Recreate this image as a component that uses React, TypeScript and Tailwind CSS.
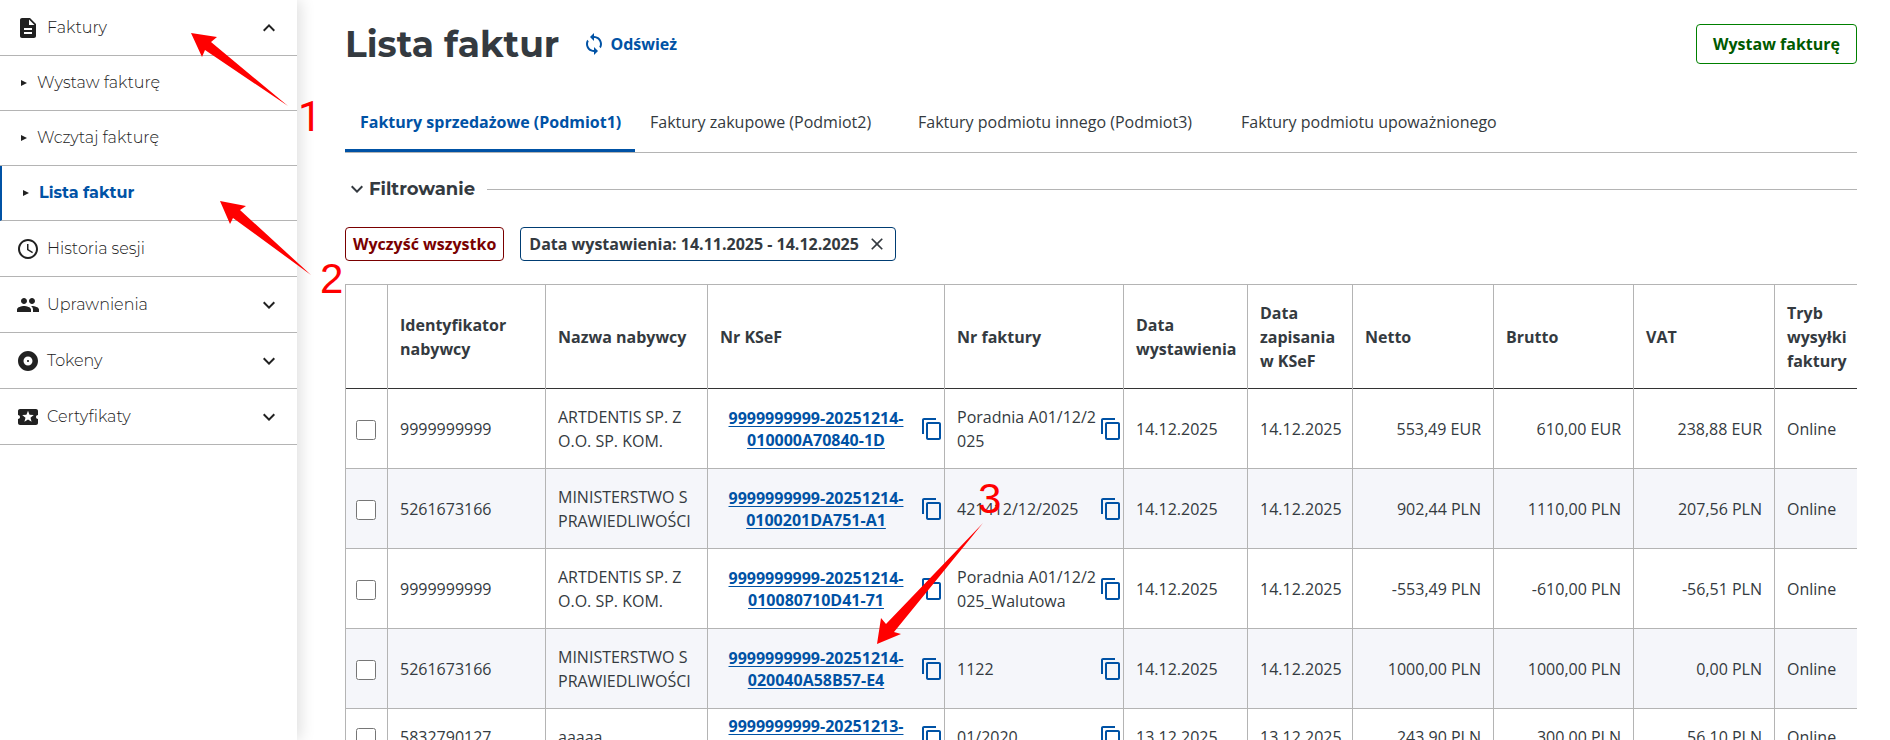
import type { ReactNode } from 'react'
import {
  MdAlbum,
  MdClose,
  MdContentCopy,
  MdDescription,
  MdExpandLess,
  MdExpandMore,
  MdLocalActivity,
  MdPeople,
  MdSchedule,
  MdSync,
} from 'react-icons/md'

const columns = [
  { label: '', width: 'w-[42px]' },
  { label: 'Identyfikator nabywcy', width: 'w-[158px]' },
  { label: 'Nazwa nabywcy', width: 'w-[162px]' },
  { label: 'Nr KSeF', width: 'w-[237px]' },
  { label: 'Nr faktury', width: 'w-[179px]' },
  { label: 'Data wystawienia', width: 'w-[124px]' },
  { label: 'Data zapisania w KSeF', width: 'w-[105px]' },
  { label: 'Netto', width: 'w-[141px]' },
  { label: 'Brutto', width: 'w-[140px]' },
  { label: 'VAT', width: 'w-[141px]' },
  { label: 'Tryb wysyłki faktury', width: 'w-[120px]' },
]

const invoices = [
  { nip: '9999999999', name: 'ARTDENTIS SP. Z O.O. SP. KOM.', ksef: '9999999999-20251214-010000A70840-1D', nr: 'Poradnia A01/12/2025', date: '14.12.2025', netto: '553,49 EUR', brutto: '610,00 EUR', vat: '238,88 EUR' },
  { nip: '5261673166', name: 'MINISTERSTWO SPRAWIEDLIWOŚCI', ksef: '9999999999-20251214-0100201DA751-A1', nr: '421412/12/2025', date: '14.12.2025', netto: '902,44 PLN', brutto: '1110,00 PLN', vat: '207,56 PLN' },
  { nip: '9999999999', name: 'ARTDENTIS SP. Z O.O. SP. KOM.', ksef: '9999999999-20251214-010080710D41-71', nr: 'Poradnia A01/12/2025_Walutowa', date: '14.12.2025', netto: '-553,49 PLN', brutto: '-610,00 PLN', vat: '-56,51 PLN' },
  { nip: '5261673166', name: 'MINISTERSTWO SPRAWIEDLIWOŚCI', ksef: '9999999999-20251214-020040A58B57-E4', nr: '1122', date: '14.12.2025', netto: '1000,00 PLN', brutto: '1000,00 PLN', vat: '0,00 PLN' },
  { nip: '5832790127', name: 'aaaaa', ksef: '9999999999-20251213-0100A0B5C3D1-7F', nr: '01/2020', date: '13.12.2025', netto: '243,90 PLN', brutto: '300,00 PLN', vat: '56,10 PLN' },
]

function MenuItem({ icon, label, chevron }: { icon: ReactNode; label: string; chevron?: ReactNode }) {
  return (
    <button type="button" className="flex min-h-14 w-full items-center gap-[7px] border-b border-[#b4b4b4] px-4 text-left text-[#212121]">
      {icon}
      <span className="grow">{label}</span>
      {chevron}
    </button>
  )
}

function SubItem({ label, active }: { label: string; active?: boolean }) {
  return (
    <a
      href="#"
      className={
        active
          ? 'flex min-h-[55px] items-center gap-[10px] border-b border-l-2 border-b-[#b4b4b4] border-l-[#0052a5] pl-[21px] font-bold text-[#0052a5]'
          : 'flex min-h-[55px] items-center gap-[10px] border-b border-[#b4b4b4] pl-[21px] text-[#212121]'
      }
    >
      <svg className="size-[6px] text-[#212121]" viewBox="0 0 6 6" fill="currentColor">
        <path d="M0 0l6 3-6 3z" />
      </svg>
      {label}
    </a>
  )
}

function Sidebar() {
  return (
    <nav className="z-10 w-[297px] shrink-0 bg-white font-['Montserrat','Inter',sans-serif] text-base font-light shadow-[4px_0_14px_rgba(0,0,0,0.12)]">
      <MenuItem icon={<MdDescription className="size-6" />} label="Faktury" chevron={<MdExpandLess className="size-6" />} />
      <SubItem label="Wystaw fakturę" />
      <SubItem label="Wczytaj fakturę" />
      <SubItem label="Lista faktur" active />
      <MenuItem icon={<MdSchedule className="size-6" />} label="Historia sesji" />
      <MenuItem icon={<MdPeople className="size-6" />} label="Uprawnienia" chevron={<MdExpandMore className="size-6" />} />
      <MenuItem icon={<MdAlbum className="size-6" />} label="Tokeny" chevron={<MdExpandMore className="size-6" />} />
      <MenuItem icon={<MdLocalActivity className="size-6" />} label="Certyfikaty" chevron={<MdExpandMore className="size-6" />} />
    </nav>
  )
}

function Tabs() {
  return (
    <div role="tablist" className="mt-5 flex border-b border-[#b4b4b4] whitespace-nowrap">
      <button type="button" role="tab" aria-selected="true" className="w-[290px] border-b-3 border-[#0052a5] px-[15px] pt-6 pb-[15px] text-left font-bold text-[#0052a5]">
        Faktury sprzedażowe (Podmiot1)
      </button>
      <button type="button" role="tab" className="w-[268px] px-[15px] pt-6 pb-[18px] text-left">
        Faktury zakupowe (Podmiot2)
      </button>
      <button type="button" role="tab" className="w-[323px] px-[15px] pt-6 pb-[18px] text-left">
        Faktury podmiotu innego (Podmiot3)
      </button>
      <button type="button" role="tab" className="px-[15px] pt-6 pb-[18px] text-left">
        Faktury podmiotu upoważnionego
      </button>
    </div>
  )
}

function CopyButton() {
  return (
    <button type="button" aria-label="Kopiuj" className="shrink-0 text-[#0052a5]">
      <MdContentCopy className="size-6" />
    </button>
  )
}

function InvoiceTable() {
  return (
    <div className="mt-[23px] overflow-x-auto">
      <table className="w-full min-w-[1550px] table-fixed border-collapse border border-[#b4b4b4]">
        <thead>
          <tr className="h-[104px] border-b border-[#333]">
            {columns.map((col) => (
              <th key={col.label} scope="col" className={`${col.width} border-x border-[#b4b4b4] pl-3 pr-2 text-left font-bold`}>
                {col.label}
              </th>
            ))}
          </tr>
        </thead>
        <tbody>
          {invoices.map((inv) => (
            <tr key={inv.ksef} className="border-b border-[#b4b4b4] even:bg-[#f5f6fa] *:border-x *:border-[#b4b4b4]">
              <td>
                <input type="checkbox" aria-label={`Zaznacz ${inv.nr}`} className="mt-[2px] ml-[10px] block size-5" />
              </td>
              <td className="px-3">{inv.nip}</td>
              <td className="px-3 pt-4 pb-[15px] break-all">{inv.name}</td>
              <td>
                <div className="flex items-center pl-1">
                  <a href="#" className="grow px-2 text-center leading-[22px] font-bold text-[#0052a5] underline underline-offset-2">
                    {inv.ksef.slice(0, 20)}
                    <br />
                    {inv.ksef.slice(20)}
                  </a>
                  <CopyButton />
                </div>
              </td>
              <td>
                <div className="flex items-center pl-3">
                  <span className="grow break-all">{inv.nr}</span>
                  <CopyButton />
                </div>
              </td>
              <td className="px-3">{inv.date}</td>
              <td className="pl-3">{inv.date}</td>
              <td className="px-3 text-right">{inv.netto}</td>
              <td className="px-3 text-right">{inv.brutto}</td>
              <td className="px-3 text-right">{inv.vat}</td>
              <td className="px-3">Online</td>
            </tr>
          ))}
        </tbody>
      </table>
    </div>
  )
}

// Red arrows and step numbers that lie over the page
function Steps() {
  return (
    <svg className="pointer-events-none absolute top-0 left-0 z-20 h-[740px] w-[1100px] font-['Liberation_Sans',sans-serif]" viewBox="0 0 1100 740" fill="#ff0000" fontSize="42">
      <path d="M191 33l26 4-6 5 77 64-83-56-3 7z" />
      <path d="M220 201l26 5-6 4 71 65-78-57-3 6z" />
      <path d="M877 644l4-26 5 6 97-101-89 109 7 2z" />
      <text x="298" y="131" className="font-['Roboto',sans-serif]">1</text>
      <text x="320" y="293">2</text>
      <text x="978" y="513">3</text>
    </svg>
  )
}

export default function App() {
  return (
    <div className="relative flex h-screen overflow-hidden bg-white font-['Open_Sans',sans-serif] text-base text-[#343a40]">
      <Sidebar />
      <main className="min-w-0 grow pl-12 pr-[33px] pt-[22px]">
        <header className="flex items-center">
          <h1 className="font-['Montserrat','Inter',sans-serif] text-4xl leading-[44px] font-bold">Lista faktur</h1>
          <button type="button" className="ml-[23px] flex items-center gap-1 font-bold text-[#0052a5]">
            <MdSync className="size-6" />
            Odśwież
          </button>
          <button type="button" className="ml-auto h-10 rounded border border-[#008000] px-4 font-bold text-[#005a00]">
            Wystaw fakturę
          </button>
        </header>
        <Tabs />
        <div className="mt-[22px] flex items-center">
          <button type="button" className="flex items-center font-['Montserrat','Inter',sans-serif] text-lg font-bold">
            <MdExpandMore className="size-6" />
            Filtrowanie
          </button>
          <hr className="ml-3 grow border-[#b4b4b4]" />
        </div>
        <div className="mt-6 flex gap-4">
          <button type="button" className="rounded border border-[#7a0000] px-[7px] py-1 font-bold text-[#7a0000]">
            Wyczyść wszystko
          </button>
          <button type="button" className="flex items-center gap-2 rounded border border-[#003d73] py-1 px-2 font-bold">
            Data wystawienia: 14.11.2025 - 14.12.2025
            <MdClose className="size-5" />
          </button>
        </div>
        <InvoiceTable />
      </main>
      <Steps />
    </div>
  )
}
